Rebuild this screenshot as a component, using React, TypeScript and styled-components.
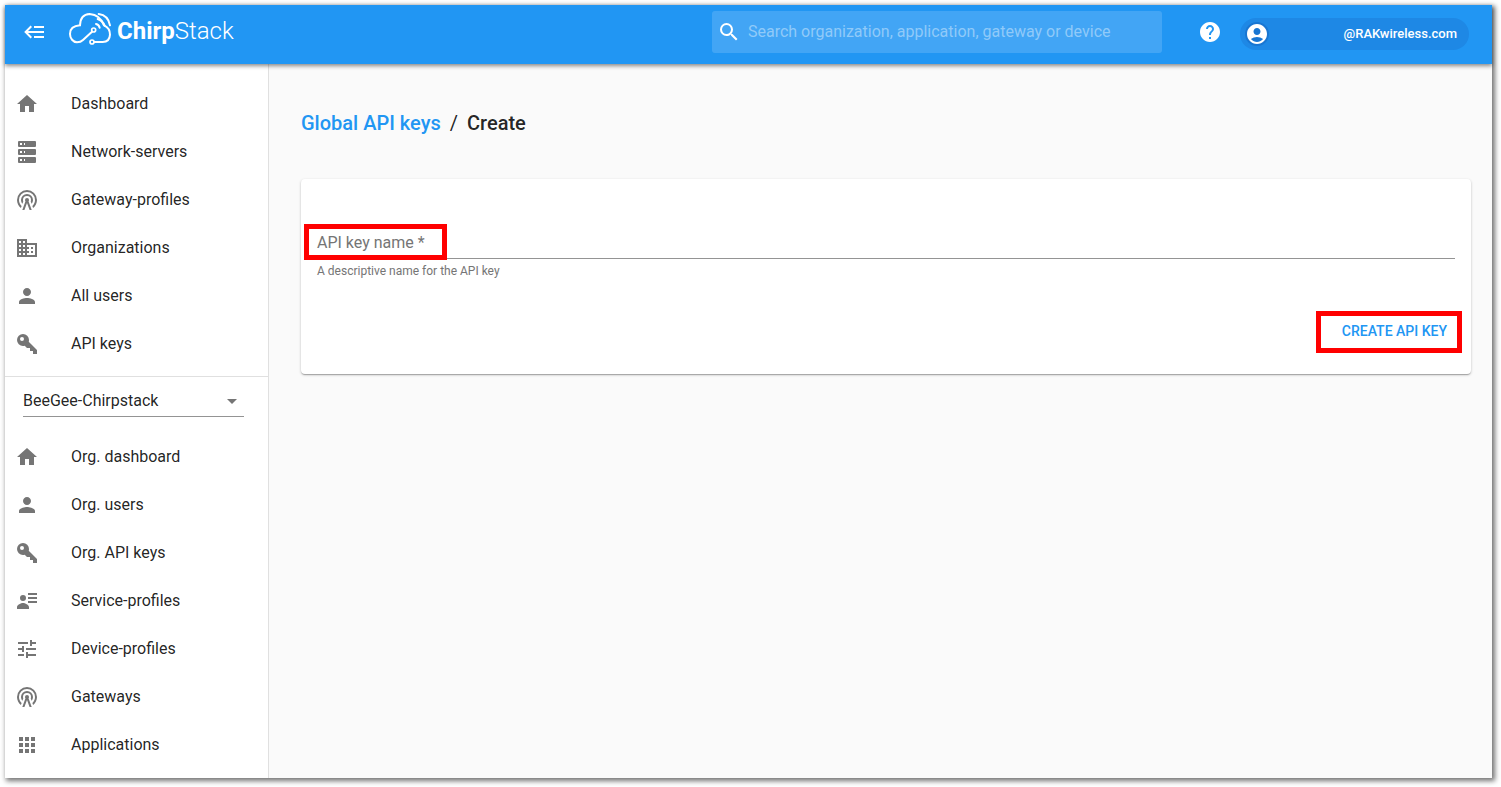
import React from "react";
import styled, { createGlobalStyle, css } from "styled-components";
import {
  MdAccountCircle,
  MdApps,
  MdArrowDropDown,
  MdDomain,
  MdHelp,
  MdHome,
  MdPerson,
  MdSearch,
  MdTune,
} from "react-icons/md";

const GlobalStyle = createGlobalStyle`
  * { box-sizing: border-box; }
  body {
    margin: 0;
    background: #fff;
    color: rgba(0, 0, 0, 0.87);
    font-family: Roboto, "Liberation Sans", sans-serif;
    font-size: 16px;
  }
  button, input, select { font-family: inherit; }
`;

const Shell = styled.div`
  display: flex;
  flex-direction: column;
  min-height: calc(100vh - 14px);
  margin: 5px 9px 9px 5px;
  background: #fafafa;
  box-shadow: 2px 2px 5px 1px rgba(0, 0, 0, 0.55);
`;

const TopBar = styled.header`
  position: relative;
  display: flex;
  align-items: center;
  height: 59px;
  padding: 0 23px 6px 18px;
  background: #2196f3;
  color: #fff;
  box-shadow: 0 2px 4px rgba(0, 0, 0, 0.45);
`;

const IconButton = styled.button`
  display: flex;
  padding: 0;
  border: 0;
  background: none;
  color: inherit;
  font-size: 24px;
  cursor: pointer;
`;

const Brand = styled.a`
  display: flex;
  align-items: center;
  margin-left: 20px;
  color: #fff;
  font-size: 24px;
  font-weight: 300;
  line-height: 35px;
  text-decoration: none;
  svg { margin: 0 4px 6px 0; }
  strong { font-weight: 700; }
`;

const SearchBox = styled.label`
  display: flex;
  align-items: center;
  width: 450px;
  height: 42px;
  margin-left: auto;
  padding: 0 5px;
  border-radius: 3px;
  background: #42a5f5;
  svg { flex: none; font-size: 24px; }
`;

const SearchInput = styled.input`
  flex: 1;
  min-width: 0;
  padding: 0 7px;
  border: 0;
  outline: 0;
  background: none;
  color: #fff;
  font-size: 16px;
  &::placeholder { color: #90caf9; opacity: 1; }
`;

const HelpLink = styled.a`
  display: flex;
  margin: 0 18px 0 36px;
  color: #fff;
  font-size: 24px;
`;

const AccountChip = styled.button`
  display: flex;
  align-items: center;
  justify-content: space-between;
  width: 229px;
  height: 32px;
  margin-top: 4px;
  padding: 0 12px 0 5px;
  border: 0;
  border-radius: 16px;
  background: #1e88e5;
  color: #fff;
  font-size: 13px;
  font-weight: 500;
  cursor: pointer;
  svg {
    border-radius: 50%;
    background: #1976d2;
    font-size: 24px;
  }
`;

const Body = styled.div`
  display: flex;
  flex: 1;
`;

const Sidebar = styled.aside`
  flex: none;
  width: 264px;
  border-right: 1px solid #e0e0e0;
  background: #fff;
`;

const NavList = styled.ul<{ $divided?: boolean }>`
  margin: 0;
  padding: 16px 0 8px;
  list-style: none;
  ${(p) =>
    p.$divided &&
    css`
      border-bottom: 1px solid #e0e0e0;
    `}
`;

const NavLink = styled.a`
  display: flex;
  align-items: center;
  gap: 32px;
  height: 48px;
  padding-left: 10px;
  color: inherit;
  line-height: 24px;
  text-decoration: none;
  svg {
    flex: none;
    color: #757575;
    font-size: 24px;
  }
`;

const OrgPicker = styled.div`
  display: flex;
  position: relative;
  margin: 8px 24px 0 18px;
  border-bottom: 1px solid #949494;
  svg {
    position: absolute;
    right: 0;
    top: 4px;
    color: #757575;
    font-size: 24px;
    pointer-events: none;
  }
`;

const OrgSelect = styled.select`
  width: 100%;
  height: 31px;
  padding: 0 24px 0 0;
  border: 0;
  outline: 0;
  appearance: none;
  background: none;
  color: inherit;
  font-size: 16px;
`;

const Content = styled.main`
  flex: 1;
  min-width: 0;
  padding: 44px 21px 24px 32px;
`;

const Title = styled.h1`
  display: flex;
  gap: 9px;
  margin: 0 0 40px;
  font-size: 20px;
  font-weight: 500;
  line-height: 31px;
  a { color: #2196f3; text-decoration: none; }
  span { font-weight: 400; }
`;

const Card = styled.form`
  display: flex;
  flex-direction: column;
  padding: 48px 16px 25px;
  border-radius: 4px;
  background: #fff;
  box-shadow: 0 1px 3px rgba(0, 0, 0, 0.2), 0 1px 1px rgba(0, 0, 0, 0.14),
    0 2px 1px -1px rgba(0, 0, 0, 0.12);
`;

const Field = styled.div`
  position: relative;
  display: flex;
  flex-direction: column;
`;

const FieldLabel = styled.label`
  position: absolute;
  left: 0;
  top: 4px;
  z-index: 1;
  color: #757575;
  line-height: 24px;
`;

const FieldInput = styled.input`
  width: 100%;
  height: 32px;
  padding: 0;
  border: 0;
  border-bottom: 1px solid #949494;
  outline: 0;
  background: none;
  font-size: 16px;
`;

const Hint = styled.p`
  margin: 4px 0 34px;
  color: #757575;
  font-size: 12px;
  line-height: 16px;
`;

const SubmitButton = styled.button`
  position: relative;
  align-self: flex-end;
  height: 36px;
  padding: 0 8px;
  border: 0;
  background: none;
  color: #2196f3;
  font-size: 14px;
  font-weight: 500;
  text-transform: uppercase;
  cursor: pointer;
`;

const Highlight = styled.span<{ $inset: string }>`
  position: absolute;
  inset: ${(p) => p.$inset};
  border: 5px solid #f00;
  pointer-events: none;
`;

const Glyph = ({ d }: { d: string }) => (
  <svg width="24" height="24" viewBox="0 0 24 24" fill="currentColor" aria-hidden="true">
    <path d={d} />
  </svg>
);

const Backburger = () => (
  <Glyph d="M5,13L9,17L7.6,18.42L1.18,12L7.6,5.58L9,7L5,11H21V13H5M21,6V8H11V6H21M21,16V18H11V16H21Z" />
);
const Server = () => (
  <Glyph d="M4,1H20A1,1 0 0,1 21,2V6A1,1 0 0,1 20,7H4A1,1 0 0,1 3,6V2A1,1 0 0,1 4,1M4,9H20A1,1 0 0,1 21,10V14A1,1 0 0,1 20,15H4A1,1 0 0,1 3,14V10A1,1 0 0,1 4,9M4,17H20A1,1 0 0,1 21,18V22A1,1 0 0,1 20,23H4A1,1 0 0,1 3,22V18A1,1 0 0,1 4,17M9,5H10V3H9V5M9,13H10V11H9V13M9,21H10V19H9V21M5,3V5H7V3H5M5,11V13H7V11H5M5,19V21H7V19H5Z" />
);
const RadioTower = () => (
  <Glyph d="M12,10A2,2 0 0,1 14,12C14,12.5 13.82,12.94 13.53,13.29L16.7,22H14.57L12,14.93L9.43,22H7.3L10.47,13.29C10.18,12.94 10,12.5 10,12A2,2 0 0,1 12,10M12,8A4,4 0 0,0 8,12C8,12.5 8.1,13 8.28,13.46L7.4,15.86C6.53,14.81 6,13.47 6,12A6,6 0 0,1 12,6A6,6 0 0,1 18,12C18,13.47 17.47,14.81 16.6,15.86L15.72,13.46C15.9,13 16,12.5 16,12A4,4 0 0,0 12,8M12,4A8,8 0 0,0 4,12C4,14.36 5,16.5 6.64,17.94L5.92,19.94C3.54,18.11 2,15.23 2,12A10,10 0 0,1 12,2A10,10 0 0,1 22,12C22,15.23 20.46,18.11 18.08,19.94L17.36,17.94C19,16.5 20,14.36 20,12A8,8 0 0,0 12,4Z" />
);
const Key = () => (
  <Glyph d="M22,18V22H18V19H15V16H12L9.74,13.74C9.19,13.91 8.61,14 8,14A6,6 0 0,1 2,8A6,6 0 0,1 8,2A6,6 0 0,1 14,8C14,8.61 13.91,9.19 13.74,9.74L22,18M7,5A2,2 0 0,0 5,7A2,2 0 0,0 7,9A2,2 0 0,0 9,7A2,2 0 0,0 7,5Z" />
);
const AccountDetails = () => (
  <Glyph d="M13,4H22V6H13V4M13,8H22V10H13V8M13,12H22V14H13V12M8,6A3,3 0 0,1 11,9A3,3 0 0,1 8,12A3,3 0 0,1 5,9A3,3 0 0,1 8,6M14,20H2V18C2,16 6,14 8,14C10,14 14,16 14,18V20Z" />
);

const CloudLogo = () => (
  <svg width="46" height="35" viewBox="201 33 138 105" fill="none" stroke="#fff" strokeWidth="6" strokeLinecap="round" aria-hidden="true">
    <path d="M276 95 L249 120 Q242 127 231 127 A22 25 0 0 1 210 102 Q210 78 240 76 Q241 43 269 42 Q300 44 312 76 Q330 84 330 104 Q329 126 308 126 H283" />
    <path d="M296 42 Q325 46 330 76" />
    <path d="M293 57 Q308 62 314 77" />
    <path d="M288 72 Q297 74 299 83" />
    <circle cx="281" cy="90" r="6" strokeWidth="5" />
    <circle cx="276" cy="126" r="6" strokeWidth="5" />
  </svg>
);

const globalLinks = [
  { label: "Dashboard", icon: <MdHome /> },
  { label: "Network-servers", icon: <Server /> },
  { label: "Gateway-profiles", icon: <RadioTower /> },
  { label: "Organizations", icon: <MdDomain /> },
  { label: "All users", icon: <MdPerson /> },
  { label: "API keys", icon: <Key /> },
];

const orgLinks = [
  { label: "Org. dashboard", icon: <MdHome /> },
  { label: "Org. users", icon: <MdPerson /> },
  { label: "Org. API keys", icon: <Key /> },
  { label: "Service-profiles", icon: <AccountDetails /> },
  { label: "Device-profiles", icon: <MdTune /> },
  { label: "Gateways", icon: <RadioTower /> },
  { label: "Applications", icon: <MdApps /> },
];

const Nav = ({ links, divided }: { links: typeof globalLinks; divided?: boolean }) => (
  <NavList $divided={divided}>
    {links.map((link) => (
      <li key={link.label}>
        <NavLink href="#">
          {link.icon}
          {link.label}
        </NavLink>
      </li>
    ))}
  </NavList>
);

export default function App() {
  return (
    <>
      <GlobalStyle />
      <Shell>
        <TopBar>
          <IconButton type="button" aria-label="Toggle menu">
            <Backburger />
          </IconButton>
          <Brand href="#">
            <CloudLogo />
            <strong>Chirp</strong>Stack
          </Brand>
          <SearchBox>
            <MdSearch aria-hidden="true" />
            <SearchInput
              type="search"
              aria-label="Search"
              placeholder="Search organization, application, gateway or device"
            />
          </SearchBox>
          <HelpLink href="#" aria-label="Help">
            <MdHelp />
          </HelpLink>
          <AccountChip type="button">
            <MdAccountCircle aria-hidden="true" />
            @RAKwireless.com
          </AccountChip>
        </TopBar>
        <Body>
          <Sidebar>
            <Nav links={globalLinks} divided />
            <OrgPicker>
              <OrgSelect aria-label="Organization">
                <option>BeeGee-Chirpstack</option>
              </OrgSelect>
              <MdArrowDropDown aria-hidden="true" />
            </OrgPicker>
            <Nav links={orgLinks} />
          </Sidebar>
          <Content>
            <Title>
              <a href="#">Global API keys</a>
              <span>/</span>
              Create
            </Title>
            <Card onSubmit={(e) => e.preventDefault()}>
              <Field>
                <FieldLabel htmlFor="key-name">
                  API key name *
                  <Highlight $inset="-7px -22px -5px -13px" />
                </FieldLabel>
                <FieldInput id="key-name" type="text" aria-describedby="key-hint" />
              </Field>
              <Hint id="key-hint">A descriptive name for the API key</Hint>
              <SubmitButton type="submit">
                Create API key
                <Highlight $inset="-2px -7px -4px -18px" />
              </SubmitButton>
            </Card>
          </Content>
        </Body>
      </Shell>
    </>
  );
}
